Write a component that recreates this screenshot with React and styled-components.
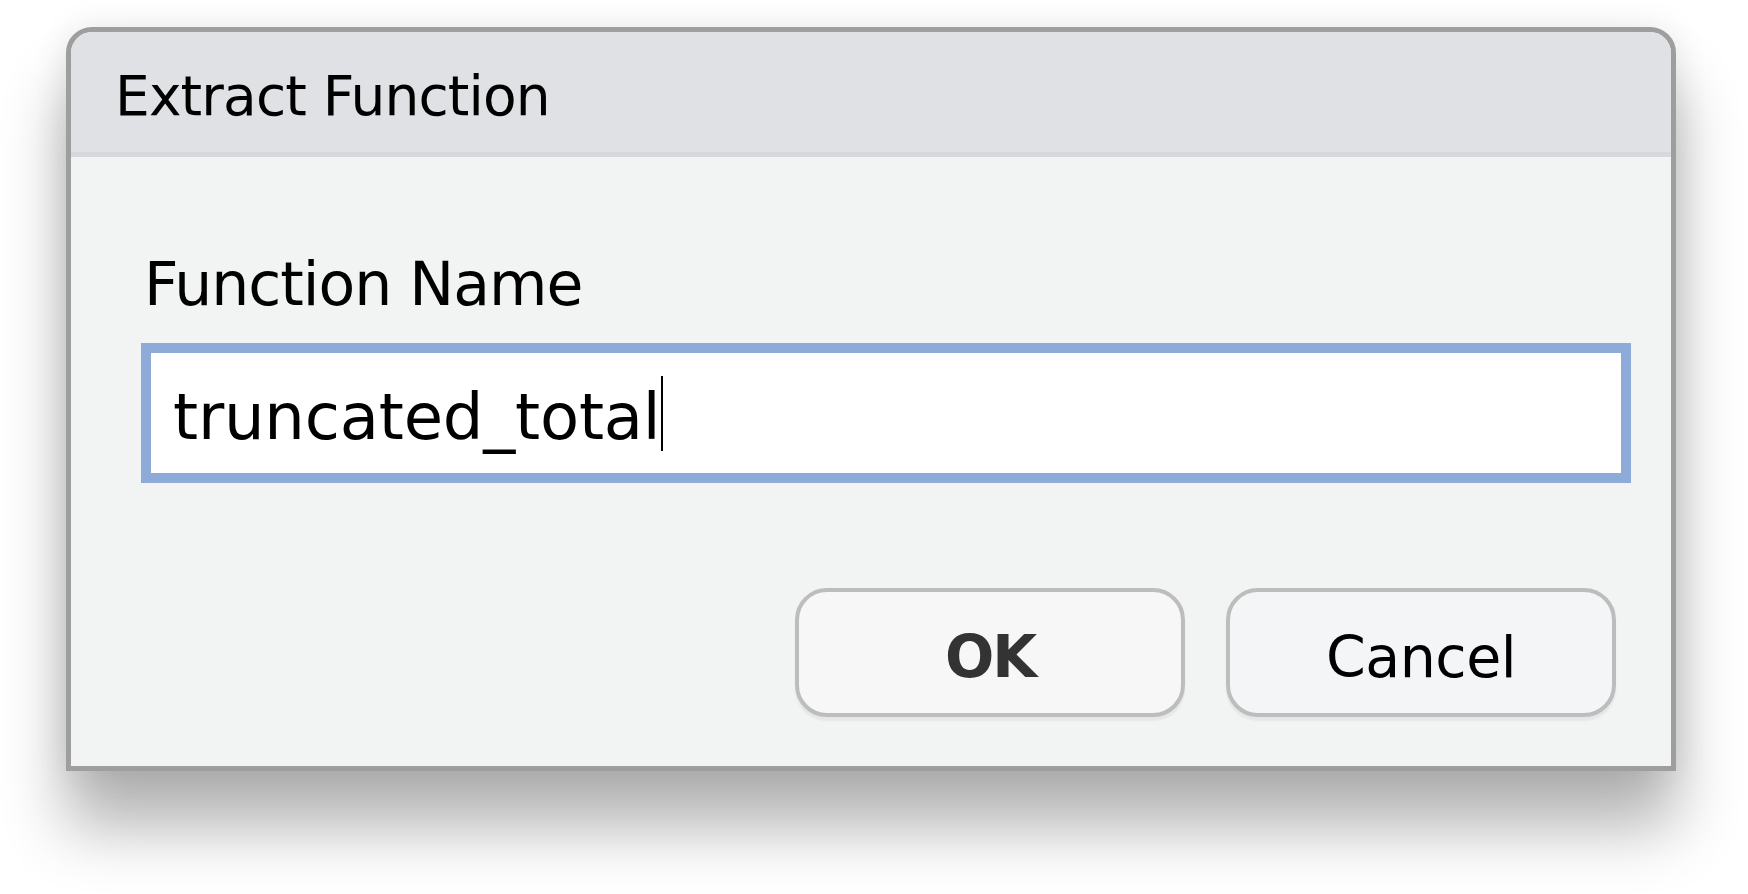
import React from 'react'
import styled, { createGlobalStyle } from 'styled-components'

const GlobalStyle = createGlobalStyle`
  html, body {
    margin: 0;
    padding: 0;
    background: #ffffff;
  }

  body {
    font-family: 'DejaVu Sans', 'Liberation Sans', sans-serif;
    color: #000;
  }
`

const StyledPage = styled.div`
  width: 1748px;
  height: 894px;
  padding: 27px 0 0 66px;
  box-sizing: border-box;
  overflow: hidden;
`

const StyledDialog = styled.div`
  width: 1610px;
  box-sizing: border-box;
  border: 5px solid #9e9e9e;
  border-radius: 26px 26px 0 0;
  background: #f2f4f3;
  overflow: hidden;
  box-shadow: 0 56px 64px rgba(0, 0, 0, 0.3), 0 0 34px rgba(0, 0, 0, 0.09);
`

const StyledTitleBar = styled.header`
  height: 125px;
  box-sizing: border-box;
  padding: 8px 0 0 44px;
  background: #e0e1e5;
  border-bottom: 5px solid #d6d8db;
`

const StyledTitle = styled.div`
  font-size: 55px;
  line-height: 112px;
  letter-spacing: -0.85px;
  color: #000;
`

const StyledBody = styled.div`
  display: flex;
  flex-direction: column;
  padding: 92px 40px 49px 70px;
`

const StyledLabel = styled.label`
  font-size: 60px;
  line-height: 71px;
  letter-spacing: -1px;
  margin-left: 3px;
`

const StyledInput = styled.div`
  margin-top: 23px;
  height: 140px;
  box-sizing: border-box;
  border: 10px solid #8eaad8;
  background: #ffffff;
  padding: 8px 0 0 22px;
  font-size: 64px;
  line-height: 112px;
  letter-spacing: -0.2px;
  white-space: nowrap;
`

const StyledCaret = styled.span`
  display: inline-block;
  width: 0;
  height: 75px;
  margin-left: 1px;
  border-left: 2px solid #000;
  vertical-align: -12px;
`

const StyledActions = styled.div`
  display: flex;
  justify-content: flex-end;
  gap: 41px;
  margin-top: 105px;
  padding-right: 15px;
`

const StyledButton = styled.button`
  width: 390px;
  height: 129px;
  box-sizing: border-box;
  padding: 10px 0 0;
  border: 4px solid #bdbdbd;
  border-radius: 32px;
  background: ${props => props.primary ? '#f7f7f7' : '#f4f5f7'};
  box-shadow: 0 4px 2px rgba(0, 0, 0, 0.05);
  font-family: 'DejaVu Sans', 'Liberation Sans', sans-serif;
  font-size: ${props => props.primary ? '58px' : '57px'};
  font-weight: ${props => props.primary ? 700 : 400};
  letter-spacing: ${props => props.primary ? '-2px' : '-0.5px'};
  line-height: 111px;
  color: ${props => props.primary ? '#333333' : '#000000'};
  text-align: center;
  cursor: default;
`

const App = () => {
  return (
    <>
      <GlobalStyle />
      <StyledPage>
        <StyledDialog>
          <StyledTitleBar>
            <StyledTitle>Extract Function</StyledTitle>
          </StyledTitleBar>

          <StyledBody>
            <StyledLabel>Function Name</StyledLabel>

            <StyledInput>
              truncated_total
              <StyledCaret />
            </StyledInput>

            <StyledActions>
              <StyledButton primary>OK</StyledButton>
              <StyledButton>Cancel</StyledButton>
            </StyledActions>
          </StyledBody>
        </StyledDialog>
      </StyledPage>
    </>
  )
}

export default App
